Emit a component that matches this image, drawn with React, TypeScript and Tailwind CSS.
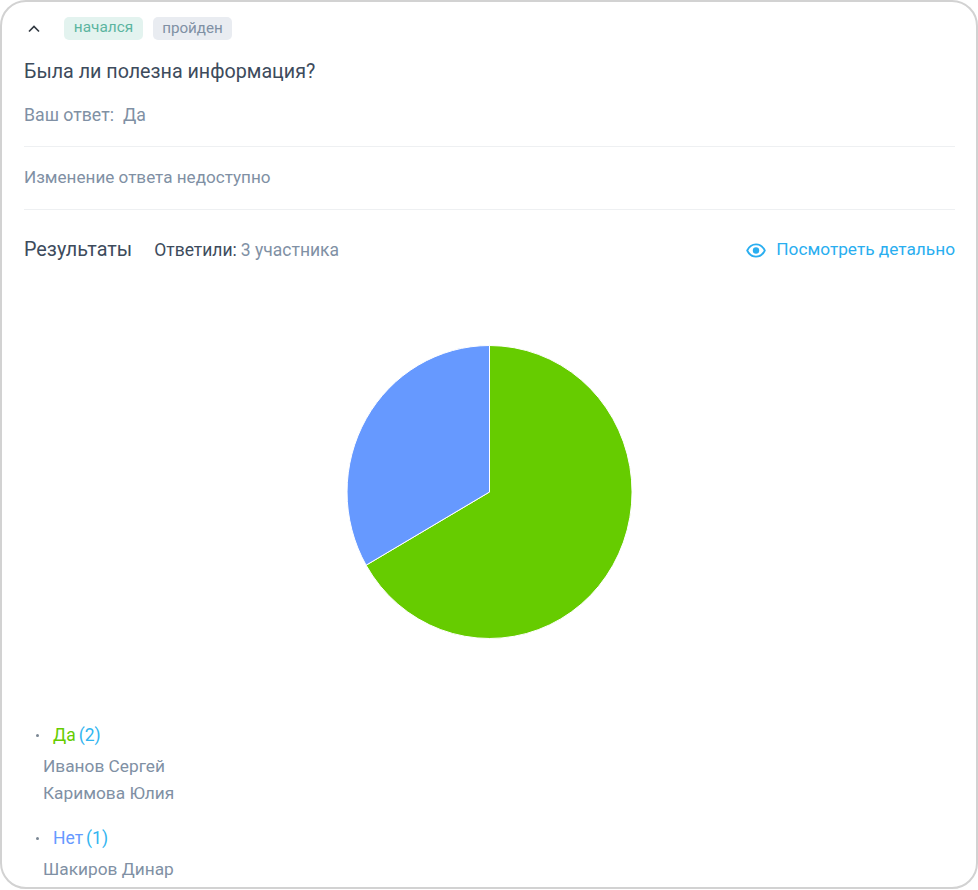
function ChevronUp() {
  return (
    <svg width="14" height="9" viewBox="0 0 14 9" fill="none" className="text-[#333a42]">
      <path d="M2 7.5 L7 2.5 L12 7.5" stroke="currentColor" strokeWidth="1.7" />
    </svg>
  );
}

function EyeIcon() {
  return (
    <svg width="20" height="15" viewBox="0 0 20 15" fill="none" className="mr-[10px]">
      <path
        d="M1.2 7.5 C3 3.6 6.2 1.4 10 1.4 C13.8 1.4 17 3.6 18.8 7.5 C17 11.4 13.8 13.6 10 13.6 C6.2 13.6 3 11.4 1.2 7.5 Z"
        stroke="#29aef0"
        strokeWidth="1.8"
      />
      <circle cx="10" cy="7.5" r="3.2" fill="#29aef0" />
    </svg>
  );
}

function Pie() {
  return (
    <svg width="289" height="296" viewBox="0 0 289 296" className="block">
      <path d="M144.5 148 L144.5 1.5 A142.5 146.5 0 1 1 21.1 221.2 Z" fill="#66cc00" stroke="#ffffff" strokeWidth="1" />
      <path d="M144.5 148 L21.1 221.2 A142.5 146.5 0 0 1 144.5 1.5 Z" fill="#6699ff" stroke="#ffffff" strokeWidth="1" />
    </svg>
  );
}

function LegendGroup({ label, count, color, names }: { label: string; count: number; color: string; names: string[] }) {
  return (
    <div>
      <div className="flex h-[24px] items-center text-[17.5px]">
        <span className="ml-[12px] h-[3px] w-[3px] rounded-full bg-[#7b8794]" />
        <span className={`ml-[14px] ${color}`}>{label}</span>
        <span className="ml-[3px] text-[#33b5f0]">({count})</span>
      </div>
      <div className="mt-[6px] pl-[19px] text-[17.3px] leading-[27px] text-[#8090a4]">
        {names.map((n) => (
          <div key={n}>{n}</div>
        ))}
      </div>
    </div>
  );
}

export default function App() {
  return (
    <div className="h-[890px] w-[978px] overflow-hidden bg-white font-['Roboto',sans-serif]">
      <div className="h-[889px] w-[978px] rounded-[26px] border-2 border-[#d2d2d2] pl-[22px] pr-[21px] pt-[14px]">
        <div className="flex h-[24px] items-center">
          <span className="ml-[3px] flex w-[14px] items-center">
            <ChevronUp />
          </span>
          <span className="ml-[23px] flex h-[23px] w-[79px] items-center justify-center rounded-[5px] bg-[#e3f3ef] text-[15.4px] text-[#5bb5a0]">
            начался
          </span>
          <span className="ml-[10px] flex h-[23px] w-[79px] items-center justify-center rounded-[5px] bg-[#e9ecf1] text-[15.2px] text-[#8090a4]">
            пройден
          </span>
        </div>

        <div className="mt-[19px] text-[19.7px] leading-[26px] text-[#3d4b5c]">Была ли полезна информация?</div>

        <div className="mt-[18px] flex h-[24px] items-center text-[17.7px] text-[#8090a4]">
          <span>Ваш ответ:</span>
          <span className="ml-[9px]">Да</span>
        </div>

        <div className="mt-[19px] border-t border-[#eef0f2]" />
        <div className="mt-[18px] h-[25px] text-[17.1px] leading-[24px] text-[#8090a4]">Изменение ответа недоступно</div>
        <div className="mt-[19px] border-t border-[#eef0f2]" />

        <div className="mt-[26px] flex h-[28px] items-center">
          <span className="text-[19.8px] text-[#3d4b5c]">Результаты</span>
          <span className="ml-[22px] text-[17.5px] text-[#3d4b5c]">Ответили:</span>
          <span className="ml-[4px] text-[17.5px] text-[#8090a4]">3 участника</span>
          <span className="ml-auto flex items-center text-[17.25px] text-[#29aef0]">
            <EyeIcon />
            Посмотреть детально
          </span>
        </div>

        <div className="mt-[80px] flex justify-center pr-[1px]">
          <Pie />
        </div>

        <div className="mt-[83px]">
          <LegendGroup label="Да" count={2} color="text-[#66cc00]" names={["Иванов Сергей", "Каримова Юлия"]} />
          <div className="mt-[19px]">
            <LegendGroup label="Нет" count={1} color="text-[#6699ff]" names={["Шакиров Динар"]} />
          </div>
        </div>
      </div>
    </div>
  );
}
